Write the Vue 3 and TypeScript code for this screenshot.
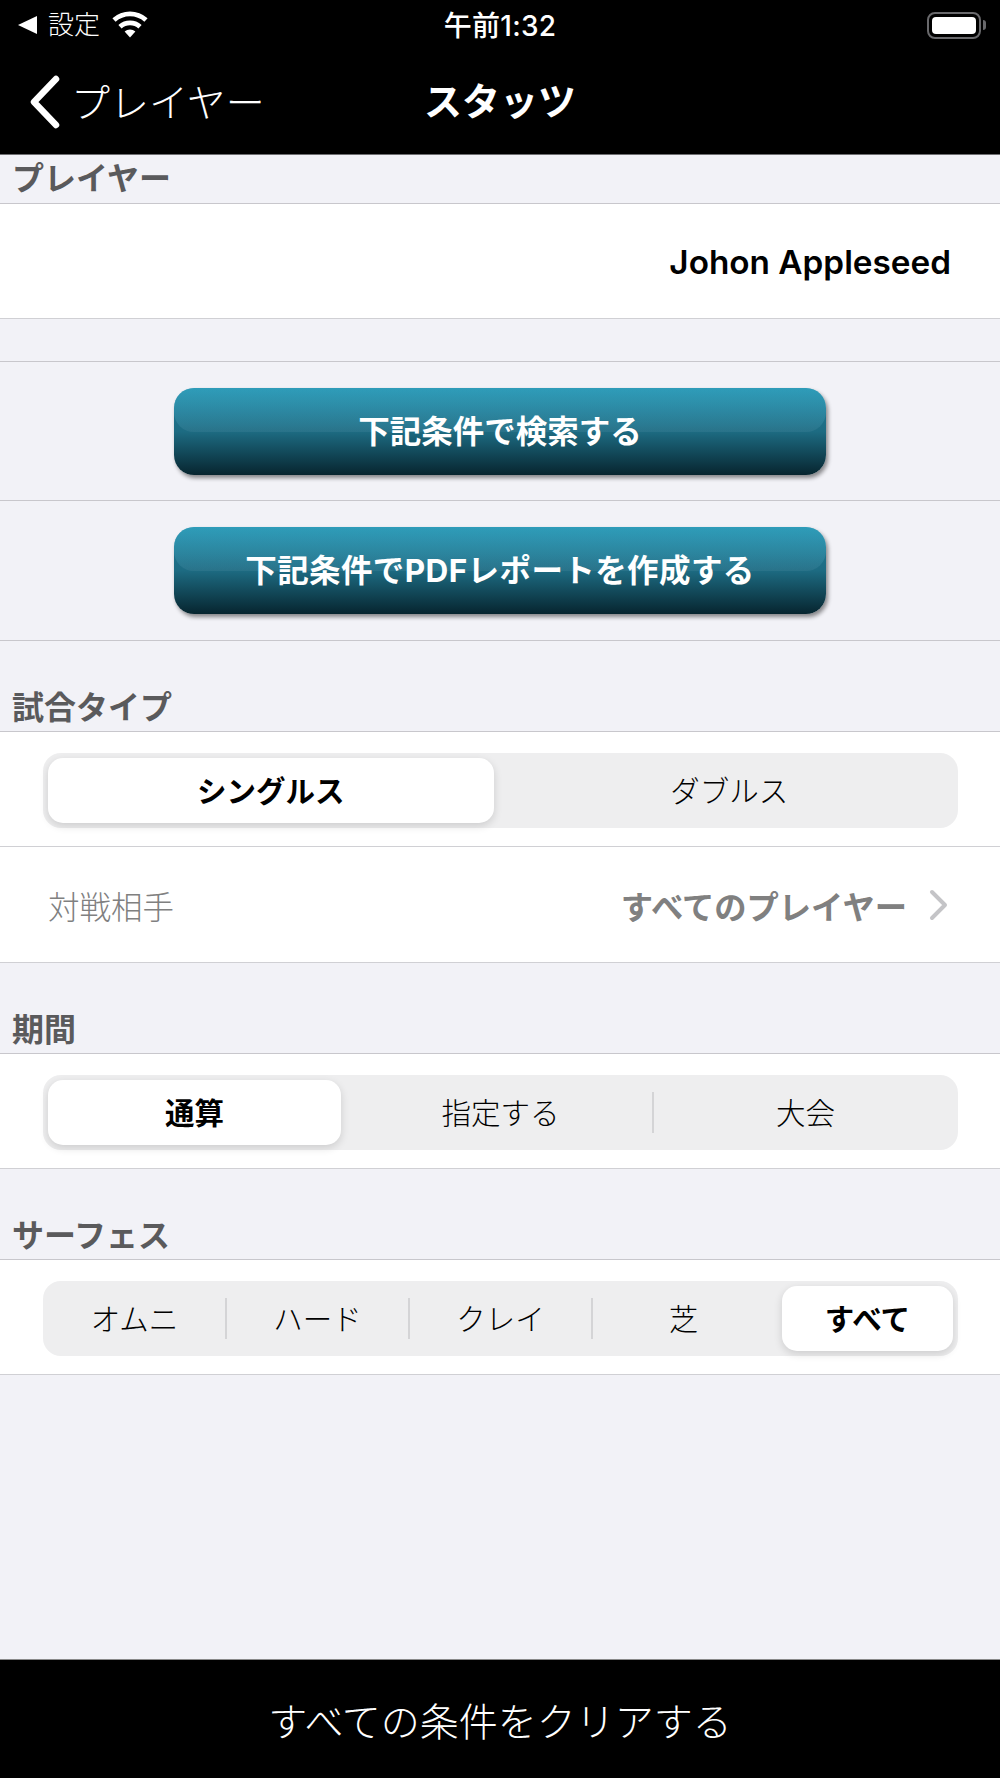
<script setup lang="ts">
interface Segment {
  labels: string[]
  active: number
}

const matchType: Segment = { labels: ['シングルス', 'ダブルス'], active: 0 }
const period: Segment = { labels: ['通算', '指定する', '大会'], active: 0 }
const surface: Segment = { labels: ['オムニ', 'ハード', 'クレイ', '芝', 'すべて'], active: 4 }

// 選択中セルの両隣には区切り線を出さない
function showDivider(seg: Segment, i: number) {
  return i > 0 && i !== seg.active && i !== seg.active + 1
}
</script>

<template>
  <div class="screen">
    <header class="top">
      <div class="status">
        <div class="status__left">
          <span class="status__back"></span>
          <span class="status__app">設定</span>
          <svg class="status__wifi" width="36" height="28" viewBox="0 0 36 28">
            <path d="M18 27.5 L12.6 21.6 A8 8 0 0 1 23.4 21.6 Z" fill="#fff" />
            <path d="M9.6 18.4 L6.4 14.9 A17.4 17.4 0 0 1 29.6 14.9 L26.4 18.4 A12.6 12.6 0 0 0 9.6 18.4 Z" fill="#fff" />
            <path d="M3.6 11.8 L0.4 8.3 A26.4 26.4 0 0 1 35.6 8.3 L32.4 11.8 A21.6 21.6 0 0 0 3.6 11.8 Z" fill="#fff" />
          </svg>
        </div>
        <span class="status__time">午前1:32</span>
        <div class="status__battery">
          <span class="status__battery-fill"></span>
          <span class="status__battery-nub"></span>
        </div>
      </div>
      <nav class="nav">
        <div class="nav__back">
          <svg width="32" height="54" viewBox="0 0 32 54">
            <path d="M27 4 L5 27 L27 50" fill="none" stroke="#fff" stroke-width="6.5" stroke-linecap="round" stroke-linejoin="round" />
          </svg>
          <span class="nav__back-text">プレイヤー</span>
        </div>
        <h1 class="nav__title">スタッツ</h1>
      </nav>
    </header>

    <main class="content">
      <div class="label label--first">プレイヤー</div>
      <div class="row row--name">Johon Appleseed</div>

      <div class="gap"></div>

      <div class="action">
        <button class="glossy">下記条件で検索する</button>
      </div>
      <div class="action">
        <button class="glossy">下記条件でPDFレポートを作成する</button>
      </div>

      <div class="label">試合タイプ</div>
      <div class="row row--seg">
        <div class="seg">
          <div v-for="(text, i) in matchType.labels" :key="text" class="seg__cell" :class="{ 'seg__cell--divider': showDivider(matchType, i) }">
            <span class="seg__text" :class="{ 'seg__text--active': i === matchType.active }">{{ text }}</span>
          </div>
        </div>
      </div>
      <div class="row row--link">
        <span class="row__name">対戦相手</span>
        <span class="row__value">すべてのプレイヤー</span>
        <svg class="row__chevron" width="20" height="32" viewBox="0 0 20 32">
          <path d="M3 3 L16 16 L3 29" fill="none" stroke="#c4c4c7" stroke-width="4" stroke-linecap="round" stroke-linejoin="round" />
        </svg>
      </div>

      <div class="label">期間</div>
      <div class="row row--seg">
        <div class="seg">
          <div v-for="(text, i) in period.labels" :key="text" class="seg__cell" :class="{ 'seg__cell--divider': showDivider(period, i) }">
            <span class="seg__text" :class="{ 'seg__text--active': i === period.active }">{{ text }}</span>
          </div>
        </div>
      </div>

      <div class="label">サーフェス</div>
      <div class="row row--seg">
        <div class="seg">
          <div v-for="(text, i) in surface.labels" :key="text" class="seg__cell" :class="{ 'seg__cell--divider': showDivider(surface, i) }">
            <span class="seg__text" :class="{ 'seg__text--active': i === surface.active }">{{ text }}</span>
          </div>
        </div>
      </div>
    </main>

    <footer class="bottom">すべての条件をクリアする</footer>
  </div>
</template>

<style>
html,
body {
  margin: 0;
  background: #f2f2f7;
}
</style>

<style scoped>
.screen {
  display: flex;
  flex-direction: column;
  height: 1778px;
  background: #f2f2f7;
  font-family: "Inter", "Noto Sans CJK JP", sans-serif;
}

.top {
  height: 154px;
  flex-shrink: 0;
  background: #000;
  color: #fff;
  border-bottom: 1px solid #6f6f72;
}

.status {
  display: flex;
  align-items: center;
  justify-content: space-between;
  position: relative;
  height: 50px;
  padding: 0 13px 0 18px;
}

.status__left {
  display: flex;
  align-items: center;
}

.status__back {
  width: 0;
  height: 0;
  border-style: solid;
  border-width: 9px 19px 9px 0;
  border-color: transparent #fff transparent transparent;
}

.status__app {
  margin-left: 11px;
  font-size: 26px;
  font-weight: 300;
  line-height: 46px;
  padding-bottom: 4px;
  font-family: "Noto Sans CJK JP", sans-serif;
}

.status__wifi {
  margin-left: 12px;
  margin-top: -2px;
}

.status__time {
  position: absolute;
  left: 0;
  right: 0;
  top: 0;
  text-align: center;
  font-size: 28px;
  font-weight: 500;
  line-height: 52px;
  letter-spacing: 0.3px;
}

.status__battery {
  display: flex;
  align-items: center;
  position: relative;
  box-sizing: border-box;
  width: 54px;
  height: 27px;
  padding: 3px;
  margin-right: 6px;
  border: 2px solid #69696c;
  border-radius: 8px;
}

.status__battery-fill {
  display: block;
  width: 100%;
  height: 100%;
  background: #fff;
  border-radius: 4px;
}

.status__battery-nub {
  position: absolute;
  right: -7px;
  top: 6px;
  width: 3px;
  height: 10px;
  background: #69696c;
  border-radius: 0 3px 3px 0;
}

.nav {
  display: flex;
  align-items: center;
  position: relative;
  height: 104px;
}

.nav__back {
  display: flex;
  align-items: center;
  gap: 10px;
  margin-left: 29px;
  font-size: 39px;
  font-weight: 300;
  line-height: 54px;
  font-family: "Noto Sans CJK JP", sans-serif;
}

.nav__back-text {
  padding-bottom: 4px;
}

.nav__title {
  position: absolute;
  left: 0;
  right: 0;
  top: 0;
  margin: 0;
  text-align: center;
  font-size: 38px;
  font-weight: 700;
  line-height: 98px;
  font-family: "Noto Sans CJK JP", sans-serif;
}

.content {
  flex: 1;
  display: flex;
  flex-direction: column;
}

.label {
  display: flex;
  align-items: flex-end;
  box-sizing: border-box;
  height: 91px;
  padding: 0 0 1px 12px;
  font-size: 32px;
  font-weight: 700;
  line-height: 44px;
  color: #5a5a5c;
  border-bottom: 1px solid #c8c7cc;
}

.label--first {
  height: 49px;
  padding-bottom: 2px;
}

.row {
  display: flex;
  align-items: center;
  box-sizing: border-box;
  height: 115px;
  background: #fff;
  border-bottom: 1px solid #d0d0d4;
}

.row--name {
  justify-content: flex-end;
  padding: 2px 49px 0 0;
  font-size: 33.3px;
  font-weight: 600;
  color: #000;
}

.row--seg {
  padding-top: 2px;
}

.row--link {
  height: 116px;
  padding: 0 51px 0 48px;
}

.row__name {
  flex: 1;
  font-size: 31.5px;
  font-weight: 300;
  color: #808080;
}

.row__value {
  font-size: 32.3px;
  font-weight: 700;
  color: #808080;
}

.row__chevron {
  margin-left: 22px;
}

.gap {
  height: 42px;
  flex-shrink: 0;
  border-bottom: 1px solid #c8c7cc;
}

.action {
  display: flex;
  align-items: center;
  justify-content: center;
  box-sizing: border-box;
  height: 139px;
  border-bottom: 1px solid #c8c7cc;
}

.action + .action {
  height: 140px;
}

.action + .action .glossy {
  letter-spacing: 0.4px;
}

.glossy {
  position: relative;
  isolation: isolate;
  overflow: hidden;
  width: 652px;
  height: 87px;
  padding: 0 0 5px;
  border: 0;
  border-radius: 20px;
  color: #fff;
  font-family: "Inter", "Noto Sans CJK JP", sans-serif;
  font-size: 31.5px;
  font-weight: 700;
  background: linear-gradient(#1f7f9b 0%, #1d6b82 50%, #07252f 100%);
  box-shadow: 2px 3px 4px rgba(0, 0, 0, 0.45);
}

.glossy::before {
  content: "";
  position: absolute;
  z-index: -1;
  left: 0;
  right: 0;
  top: 0;
  height: 44px;
  border-radius: 0 0 20px 20px;
  background: linear-gradient(rgba(70, 200, 230, 0.4), rgba(130, 170, 190, 0.12));
}

.seg {
  flex: 1;
  display: flex;
  height: 75px;
  margin: 0 42px 0 43px;
  background: #eeeeef;
  border-radius: 18px;
}

.seg__cell {
  flex: 1 1 0;
  position: relative;
  display: flex;
  min-width: 0;
  font-size: 29.5px;
  font-weight: 300;
  color: #000;
  font-family: "Noto Sans CJK JP", sans-serif;
}

.seg__cell--divider::before {
  content: "";
  position: absolute;
  left: -1px;
  top: 17px;
  bottom: 17px;
  width: 2px;
  background: #d4d4d6;
}

.seg__text {
  flex: 1;
  display: flex;
  align-items: center;
  justify-content: center;
  padding-bottom: 3px;
  white-space: nowrap;
}

.seg__text--active {
  margin: 5px;
  background: #fff;
  border-radius: 15px;
  font-weight: 700;
  box-shadow: 0 3px 8px rgba(0, 0, 0, 0.14);
}

.seg__cell:first-child .seg__text--active {
  margin-right: 7px;
}

.seg__cell:last-child .seg__text--active {
  margin-left: 7px;
}

.bottom {
  display: flex;
  align-items: center;
  justify-content: center;
  flex-shrink: 0;
  height: 118px;
  background: #000;
  border-top: 1px solid #8a8a8a;
  color: #fff;
  font-size: 39px;
  font-weight: 300;
  font-family: "Noto Sans CJK JP", sans-serif;
}
</style>
